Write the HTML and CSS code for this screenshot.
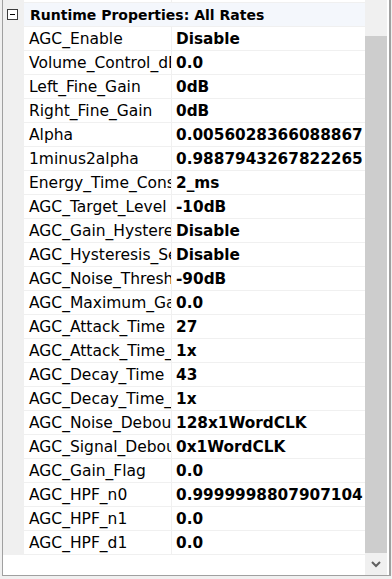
FILE: index.html
```html
<!DOCTYPE html>
<html lang="en">
<head>
    <meta charset="UTF-8">
    <title>Runtime Properties</title>
    <link rel="stylesheet" href="styles.css">
</head>
<body>
    <div class="prop-grid">
        <div class="prop-list">
            <div class="row row-cut"><span class="margin"></span><span class="name"></span><span class="value"></span></div>
            <div class="row category">
                <span class="margin"><span class="toggle"></span></span>
                <span class="cat-title">Runtime Properties: All Rates</span>
            </div>
            <div class="row"><span class="margin"></span><span class="name">AGC_Enable</span><span class="value">Disable</span></div>
            <div class="row"><span class="margin"></span><span class="name">Volume_Control_dB</span><span class="value">0.0</span></div>
            <div class="row"><span class="margin"></span><span class="name">Left_Fine_Gain</span><span class="value">0dB</span></div>
            <div class="row"><span class="margin"></span><span class="name">Right_Fine_Gain</span><span class="value">0dB</span></div>
            <div class="row"><span class="margin"></span><span class="name">Alpha</span><span class="value">0.0056028366088867</span></div>
            <div class="row"><span class="margin"></span><span class="name">1minus2alpha</span><span class="value">0.9887943267822265</span></div>
            <div class="row"><span class="margin"></span><span class="name">Energy_Time_Constant</span><span class="value">2_ms</span></div>
            <div class="row"><span class="margin"></span><span class="name">AGC_Target_Level</span><span class="value">-10dB</span></div>
            <div class="row"><span class="margin"></span><span class="name">AGC_Gain_Hysteresis</span><span class="value">Disable</span></div>
            <div class="row"><span class="margin"></span><span class="name">AGC_Hysteresis_Setting</span><span class="value">Disable</span></div>
            <div class="row"><span class="margin"></span><span class="name">AGC_Noise_Threshold</span><span class="value">-90dB</span></div>
            <div class="row"><span class="margin"></span><span class="name">AGC_Maximum_Gain</span><span class="value">0.0</span></div>
            <div class="row"><span class="margin"></span><span class="name">AGC_Attack_Time</span><span class="value">27</span></div>
            <div class="row"><span class="margin"></span><span class="name">AGC_Attack_Time_Scale</span><span class="value">1x</span></div>
            <div class="row"><span class="margin"></span><span class="name">AGC_Decay_Time</span><span class="value">43</span></div>
            <div class="row"><span class="margin"></span><span class="name">AGC_Decay_Time_Scale</span><span class="value">1x</span></div>
            <div class="row"><span class="margin"></span><span class="name">AGC_Noise_Debounce</span><span class="value">128x1WordCLK</span></div>
            <div class="row"><span class="margin"></span><span class="name">AGC_Signal_Debounce</span><span class="value">0x1WordCLK</span></div>
            <div class="row"><span class="margin"></span><span class="name">AGC_Gain_Flag</span><span class="value">0.0</span></div>
            <div class="row"><span class="margin"></span><span class="name">AGC_HPF_n0</span><span class="value">0.9999998807907104</span></div>
            <div class="row"><span class="margin"></span><span class="name">AGC_HPF_n1</span><span class="value">0.0</span></div>
            <div class="row"><span class="margin"></span><span class="name">AGC_HPF_d1</span><span class="value">0.0</span></div>
            <div class="filler"></div>
        </div>
        <div class="scrollbar">
            <div class="track"></div>
            <div class="thumb"></div>
            <div class="arrow">
                <svg width="10" height="7" viewBox="0 0 10 7"><path d="M1 1 L5 5 L9 1" fill="none" stroke="#606060" stroke-width="2"/></svg>
            </div>
        </div>
    </div>
</body>
</html>
```

FILE: styles.css
```css
body {
    margin: 0;
    background: #f0f0f0;
    font-family: "DejaVu Sans", sans-serif;
    font-size: 15.5px;
    color: #000;
}
.prop-grid {
    display: flex;
    width: 386px;
    height: 575px;
    margin-left: 2px;
    border-left: 1px solid #a0a0a0;
    border-right: 2px solid #a0a0a0;
    border-bottom: 1px solid #a0a0a0;
    background: #fff;
}
.prop-list {
    width: 362px;
    display: flex;
    flex-direction: column;
    overflow: hidden;
}
.row {
    display: grid;
    grid-template-columns: 21px 148px 1fr;
    height: 23px;
    border-bottom: 1px solid #f0f0f0;
    line-height: 25px;
    white-space: nowrap;
}
.row-cut {
    height: 2px;
}
.margin {
    background: #f0f0f0;
    position: relative;
}
.name {
    padding-left: 5px;
    overflow: hidden;
    border-right: 1px solid #f0f0f0;
}
.value {
    padding-left: 4px;
    font-size: 15.3px;
    font-weight: bold;
    overflow: hidden;
}
.category {
    grid-template-columns: 21px 1fr;
    background: #f4f7fc;
}
.cat-title {
    padding-left: 6px;
    font-size: 14px;
    font-weight: bold;
    overflow: hidden;
}
.toggle {
    position: absolute;
    left: 4px;
    top: 6px;
    width: 9px;
    height: 9px;
    border: 1px solid #3c3c3c;
    background: #fff;
}
.toggle::after {
    content: "";
    position: absolute;
    left: 2px;
    top: 4px;
    width: 5px;
    height: 1px;
    background: #000;
}
.filler {
    flex: 1;
    background: #fff;
}
.scrollbar {
    width: 22px;
    display: flex;
    flex-direction: column;
    background: #f0f0f0;
}
.track {
    height: 36px;
}
.thumb {
    flex: 1;
    background: #cdcdcd;
}
.arrow {
    height: 22px;
    display: flex;
    align-items: center;
    justify-content: center;
}
```
